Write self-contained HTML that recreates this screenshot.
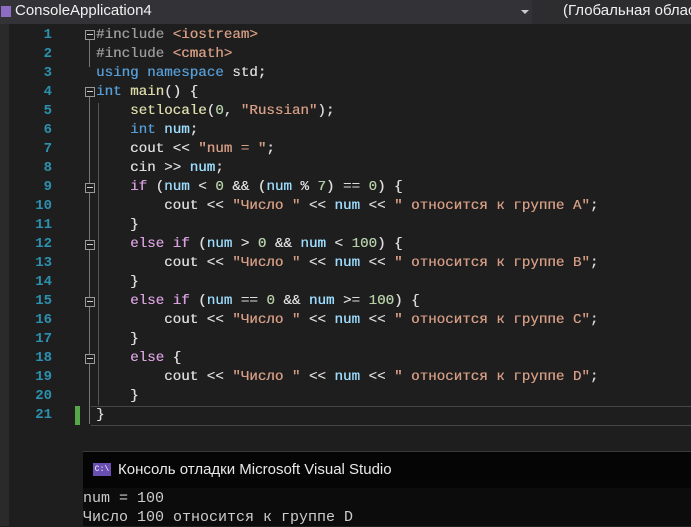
<!DOCTYPE html>
<html><head><meta charset="utf-8"><style>
body{margin:0;width:691px;height:526px;overflow:hidden;background:#1e1e1e;position:relative;font-family:"Liberation Sans","Noto Sans CJK SC",sans-serif}
.top{position:absolute;left:0;top:0;width:691px;height:24px;background:#2d2d30}
.top .a{position:absolute;left:0;top:0;width:532px;height:24px;background:#333337}
.top .t1{position:absolute;left:15px;top:2px;color:#f1f1f1;font-size:15px}
.top .t2{position:absolute;left:563px;top:2px;color:#f1f1f1;font-size:15px;white-space:nowrap}
.ico{position:absolute;left:1px;top:6px;width:10px;height:11px;background:#8e6cc4}
.arr{position:absolute;left:521px;top:10px;border-left:4px solid transparent;border-right:4px solid transparent;border-top:4px solid #ccc}
.strip{position:absolute;left:0;top:24px;width:9px;height:502px;background:#2a2a2a}
.ln{position:absolute;left:10px;width:42px;text-align:right;color:#2b91af;font:bold 14px "Liberation Mono",monospace;line-height:19px}
.code{position:absolute;left:96px;top:26px;font:14.2px "Liberation Mono",monospace;line-height:19px;color:#dcdcdc;white-space:pre;text-shadow:0.3px 0 0 currentColor}
.k{color:#569cd6}.c{color:#d8a0df}.s{color:#d69d85}.n{color:#b5cea8}.v{color:#9cdcfe}.f{color:#dcdcaa}.p{color:#9b9b9b}
.box{position:absolute;left:85px;width:8px;height:8px;border:1px solid #999;background:#1e1e1e;z-index:2}
.box:after{content:"";position:absolute;left:1px;top:3px;width:6px;height:1px;background:#ccc}
.vl{position:absolute;width:1px;background:#777}
.cur{position:absolute;left:91px;top:406px;width:600px;height:18px;border-top:1px solid #464646;border-bottom:1px solid #464646}
.green{position:absolute;left:75px;top:406px;width:5px;height:19px;background:#57a64a}
.con{position:absolute;left:83px;top:451px;width:608px;height:75px;background:#0c0c0c}
.ct{position:absolute;left:0;top:0;width:608px;height:36px;background:#050505;border-top:1px solid #3a3a3a}
.ct span{position:absolute;left:35px;top:9px;color:#e8e8e8;font-size:15px}
.ci{position:absolute;left:10px;top:11px;width:18px;height:13px;background:#6a4fb3;color:#fff;font:8px "Liberation Mono",monospace;line-height:13px;text-align:center}
.co{position:absolute;left:0;top:38px;color:#cccccc;font:15px "Liberation Mono",monospace;line-height:19px;white-space:pre}
</style></head><body>
<div class="top"><div class="a"></div><div class="ico"></div><div class="t1">ConsoleApplication4</div><div class="arr"></div><div class="t2">(Глобальная облас</div></div>
<div class="strip"></div>
<div class="ln" style="top:26px">1<br>2<br>3<br>4<br>5<br>6<br>7<br>8<br>9<br>10<br>11<br>12<br>13<br>14<br>15<br>16<br>17<br>18<br>19<br>20<br>21</div>
<div class="cur"></div><div class="green"></div>
<div class="box" style="top:30px"></div>
<div class="vl" style="left:89px;top:40px;height:27px"></div>
<div class="box" style="top:87px"></div>
<div class="vl" style="left:89px;top:97px;height:327px"></div>
<div class="box" style="top:183px"></div>
<div class="box" style="top:240px"></div>
<div class="box" style="top:297px"></div>
<div class="box" style="top:354px"></div>
<div class="vl" style="left:98px;top:103px;height:302px;background:#555"></div>
<div class="code"><span class="p">#include</span> <span class="s">&lt;iostream&gt;</span>
<span class="p">#include</span> <span class="s">&lt;cmath&gt;</span>
<span class="k">using</span> <span class="k">namespace</span> std;
<span class="k">int</span> <span class="f">main</span>() {
    <span class="f">setlocale</span>(<span class="n">0</span>, <span class="s">"Russian"</span>);
    <span class="k">int</span> <span class="v">num</span>;
    cout &lt;&lt; <span class="s">"num = "</span>;
    cin &gt;&gt; <span class="v">num</span>;
    <span class="c">if</span> (<span class="v">num</span> &lt; <span class="n">0</span> &amp;&amp; (<span class="v">num</span> % <span class="n">7</span>) == <span class="n">0</span>) {
        cout &lt;&lt; <span class="s">"Число "</span> &lt;&lt; <span class="v">num</span> &lt;&lt; <span class="s">" относится к группе A"</span>;
    }
    <span class="c">else</span> <span class="c">if</span> (<span class="v">num</span> &gt; <span class="n">0</span> &amp;&amp; <span class="v">num</span> &lt; <span class="n">100</span>) {
        cout &lt;&lt; <span class="s">"Число "</span> &lt;&lt; <span class="v">num</span> &lt;&lt; <span class="s">" относится к группе B"</span>;
    }
    <span class="c">else</span> <span class="c">if</span> (<span class="v">num</span> == <span class="n">0</span> &amp;&amp; <span class="v">num</span> &gt;= <span class="n">100</span>) {
        cout &lt;&lt; <span class="s">"Число "</span> &lt;&lt; <span class="v">num</span> &lt;&lt; <span class="s">" относится к группе C"</span>;
    }
    <span class="c">else</span> {
        cout &lt;&lt; <span class="s">"Число "</span> &lt;&lt; <span class="v">num</span> &lt;&lt; <span class="s">" относится к группе D"</span>;
    }
}</div>
<div class="con"><div class="ct"><div class="ci">C:\</div><span>Консоль отладки Microsoft Visual Studio</span></div>
<div class="co">num = 100
Число 100 относится к группе D</div></div>
</body></html>
